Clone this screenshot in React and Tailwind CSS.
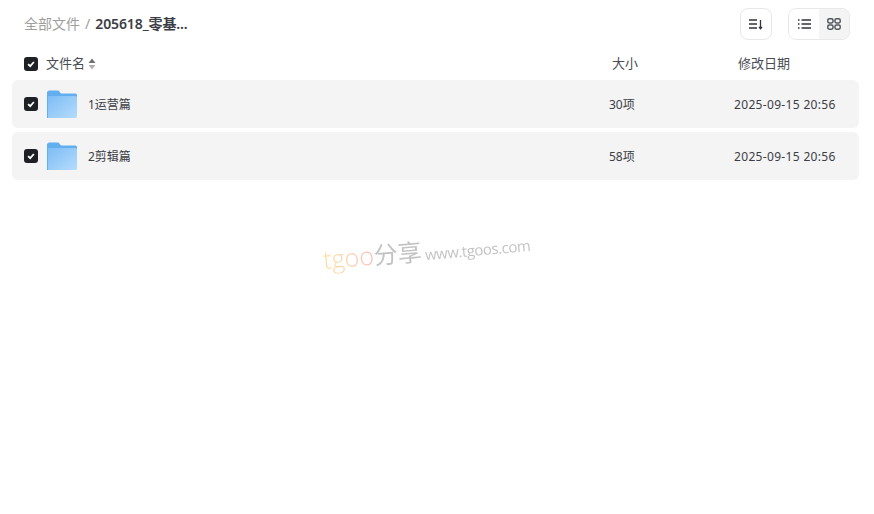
import React from "react";

const font = "font-['Noto_Sans','Noto_Sans_CJK_SC',sans-serif]";

const Check = () => (
  <span className="flex h-[14px] w-[14px] items-center justify-center rounded-[3px] bg-[#1f2026]">
    <svg width="10" height="10" viewBox="0 0 10 10" fill="none">
      <path d="M2.1 5.1 4.2 7.1 7.9 3" stroke="#fff" strokeWidth="1.8" />
    </svg>
  </span>
);

const Folder = () => (
  <svg width="30" height="28" viewBox="0 0 30 28">
    <defs>
      <linearGradient id="folderFront" x1="0" y1="0" x2="1" y2="1">
        <stop offset="0" stopColor="#7cbcf6" />
        <stop offset="1" stopColor="#b5dcfb" />
      </linearGradient>
    </defs>
    <path d="M1 1.5A1 1 0 0 1 2 .5h9.5l2.5 3h14.5a1.5 1.5 0 0 1 1.5 1.5v4H0V1.5Z" fill="#62aeef" />
    <path d="M0 6h28.5A1.5 1.5 0 0 1 30 7.5V26.5a1.5 1.5 0 0 1-1.5 1.5H1.5A1.5 1.5 0 0 1 0 26.5V6Z" fill="url(#folderFront)" />
    <path d="M0 6h1v22h-.5A.5.5 0 0 1 0 27.5V6Z" fill="#62aeef" />
    <rect x="22" y="9" width="4" height="2" fill="#9ccdf7" />
  </svg>
);

const rows = [
  { name: "1运营篇", size: "30项", date: "2025-09-15 20:56" },
  { name: "2剪辑篇", size: "58项", date: "2025-09-15 20:56" },
];

const App = () => {
  return (
    <div className={`relative h-[514px] w-[874px] overflow-hidden bg-white pl-3 pr-[15px] text-[#3b3d45] ${font}`}>
      {/* toolbar */}
      <div className="flex h-12 items-center pl-3 pr-[9px]">
        <span className="pb-px text-sm text-[#a09e9c]">全部文件</span>
        <span className="mx-[5px] pb-px text-sm text-[#a09e9c]">/</span>
        <span className="pb-px text-[14px] font-semibold tracking-[-0.1px] text-[#3b3d45]">205618_零基...</span>
        <button className="ml-auto flex h-8 w-8 items-center justify-center rounded-lg border border-[#e8e8e8] bg-white">
          <svg width="14" height="12" viewBox="0 0 14 12" fill="none" stroke="#33353d" strokeWidth="1.3">
            <path d="M0 2h8M0 6h8M0 10h8M11.5 2v8.5M10 9l1.5 1.7L13 9" />
          </svg>
        </button>
        <div className="ml-4 flex h-8 w-[62px] overflow-hidden rounded-lg border border-[#e8e8e8]">
          <button className="flex flex-1 items-center justify-center bg-white">
            <svg width="13" height="10" viewBox="0 0 13 10" fill="none" stroke="#33353d" strokeWidth="1.3">
              <path d="M0 1h1.5M3.5 1H13M0 5h1.5M3.5 5H13M0 9h1.5M3.5 9H13" />
            </svg>
          </button>
          <button className="flex flex-1 items-center justify-center bg-[#f4f4f4]">
            <svg width="14" height="12" viewBox="0 0 14 12" fill="none" stroke="#55575e" strokeWidth="1.5">
              <rect x=".8" y=".8" width="5.2" height="4.2" rx="1.4" />
              <rect x="8" y=".8" width="5.2" height="4.2" rx="1.4" />
              <rect x=".8" y="7" width="5.2" height="4.2" rx="1.4" />
              <rect x="8" y="7" width="5.2" height="4.2" rx="1.4" />
            </svg>
          </button>
        </div>
      </div>

      {/* column header */}
      <div className="flex h-8 items-center pl-3 text-[13px] text-[#4a4c54]">
        <Check />
        <span className="ml-2">文件名</span>
        <svg className="ml-[3px]" width="8" height="12" viewBox="0 0 8 12">
          <path d="M4 .5 7.5 5H.5Z" fill="#707070" />
          <path d="M4 11.5.5 7h7Z" fill="#b0b0b0" />
        </svg>
        <span className="ml-[516px] w-[126px]">大小</span>
        <span>修改日期</span>
      </div>

      {/* rows */}
      <div className="flex flex-col gap-1">
        {rows.map((row) => (
          <div key={row.name} className="flex h-12 items-center rounded-md bg-[#f4f4f4] pl-3 text-xs">
            <Check />
            <span className="ml-[9px]">
              <Folder />
            </span>
            <span className="ml-[11px] w-[521px] pt-px">{row.name}</span>
            <span className="w-[125px] pt-px">{row.size}</span>
            <span className="pt-px tracking-[0.33px]">{row.date}</span>
          </div>
        ))}
      </div>

      {/* watermark */}
      <div className="absolute left-[323px] top-[234px] flex -rotate-[5deg] items-baseline whitespace-nowrap font-['Open_Sans','Noto_Sans_CJK_SC',sans-serif] opacity-50">
        <span className="bg-gradient-to-r from-[#fbc02d] to-[#f8786a] bg-clip-text text-[25px] font-light leading-8 text-transparent">tgoo</span>
        <span className="text-[24px] leading-8 text-[#888888]">分享</span>
        <span className="ml-[3px] text-[15px] leading-8 tracking-[-0.45px] text-[#888888]">www.tgoos.com</span>
      </div>
    </div>
  );
};

export default App;
